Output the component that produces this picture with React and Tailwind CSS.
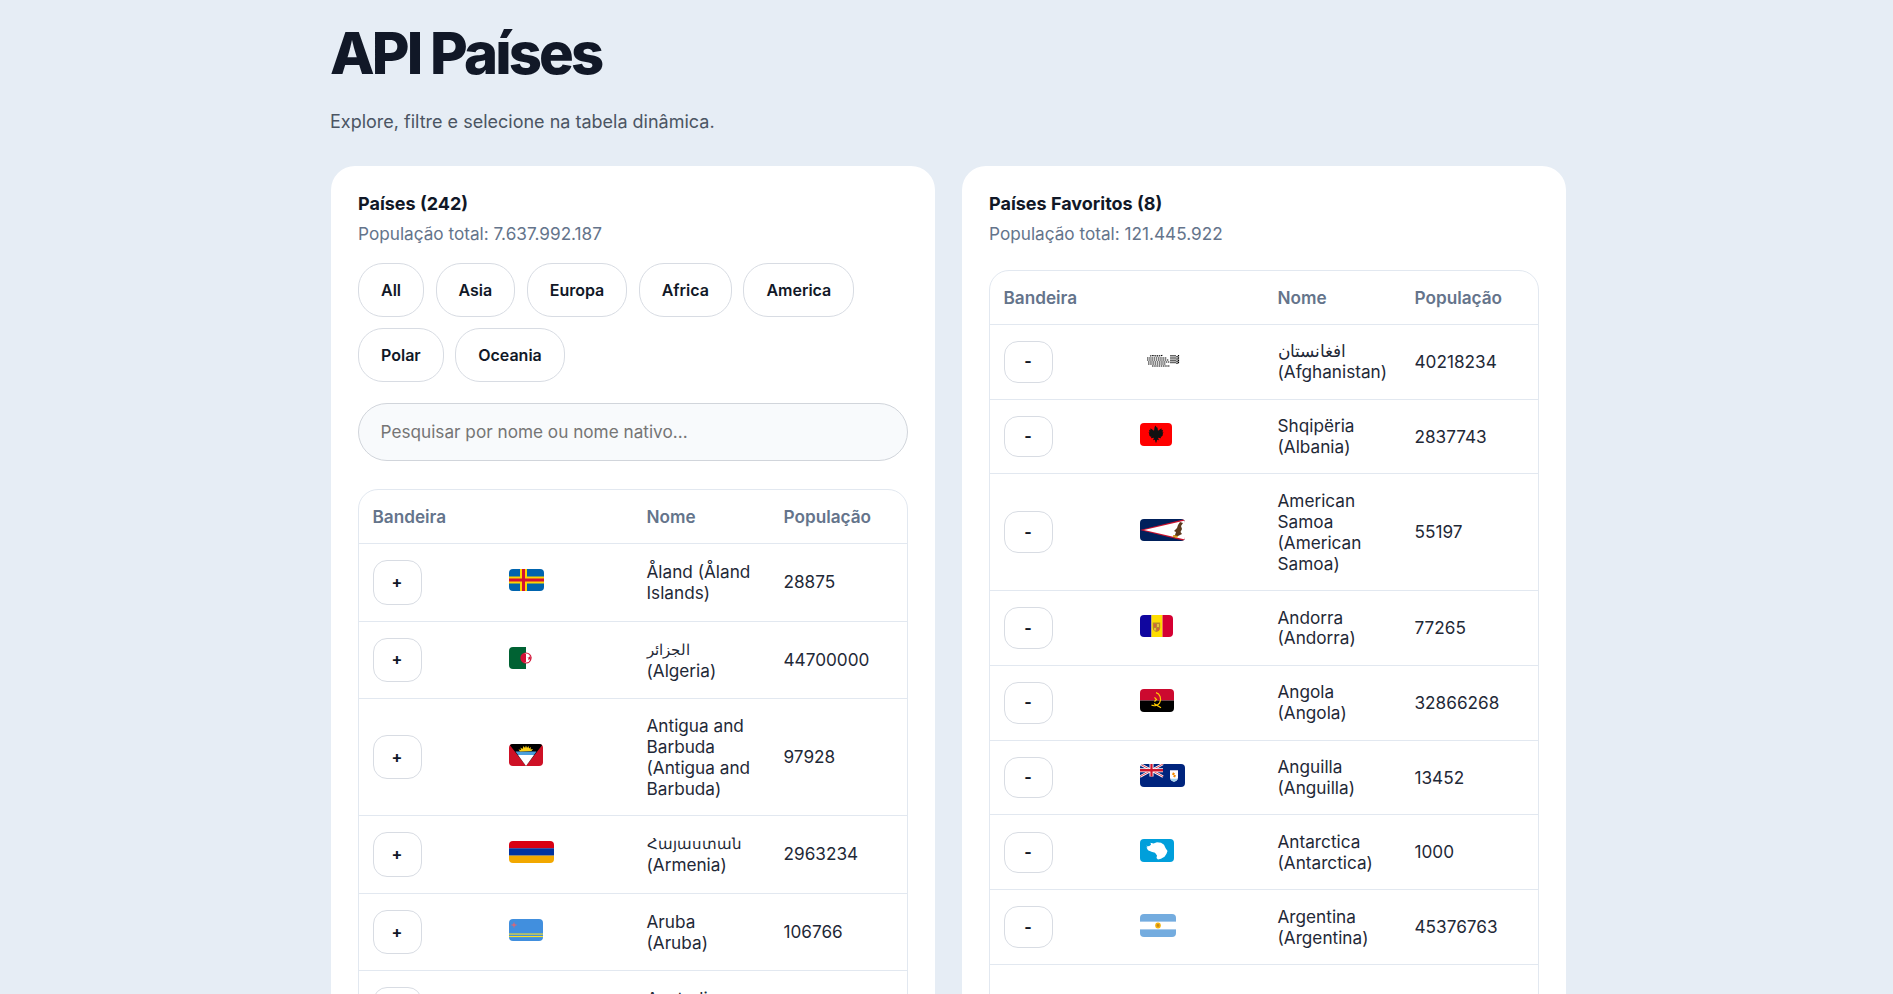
const font = { fontFamily: "Inter, sans-serif" };

function Flag({ w, h = 22, children }) {
  return (
    <svg
      width={w}
      height={h}
      viewBox={`0 0 ${w} 22`}
      preserveAspectRatio="none"
      className="block -ml-[1px] mb-[4px] rounded-[4px]"
    >
      {children}
    </svg>
  );
}

const flags = {
  aland: (
    <Flag w={35}>
      <rect width="35" height="22" fill="#0064ae" />
      <rect x="11" width="7" height="22" fill="#ffd300" />
      <rect y="7.5" width="35" height="7" fill="#ffd300" />
      <rect x="13" width="3" height="22" fill="#d21034" />
      <rect y="9.5" width="35" height="3" fill="#d21034" />
    </Flag>
  ),
  algeria: (
    <Flag w={34}>
      <rect width="17" height="22" fill="#006233" />
      <rect x="17" width="17" height="22" fill="#fff" />
      <circle cx="17" cy="11" r="5.6" fill="#d21034" />
      <path d="M17 6.500a4.500 4.500 0 0 1 0 9 3.800 4.500 0 0 1 0-9z" fill="#fff" />
      <path d="M14.800 6.800a4.500 4.500 0 0 0 0 8.400l2.200-.2v-8z" fill="#d21034" />
      <path d="M20.500 9l.6 1.600 1.700 0-1.300 1 .5 1.600-1.500-1-1.400 1 .5-1.600-1.300-1 1.700 0z" fill="#d21034" />
    </Flag>
  ),
  antigua: (
    <Flag w={34}>
      <rect width="34" height="22" fill="#ce1126" />
      <path d="M0 0h34L17 22z" fill="#000" />
      <path d="M9 11h16l-8 11z" fill="#fff" />
      <path d="M6.500 7.500h21L25 11H9z" fill="#4a9fdc" />
      <path d="M11 7.500l-1.500-2 2.500.5-.5-2.500 2 1.500L14.500 2l1.500 2 1-2.500 1 2.500 1.500-2 .500 2.500 2-1.500-.5 2.500 2.500-.5-1.500 2z" fill="#fcd116" />
    </Flag>
  ),
  armenia: (
    <Flag w={45}>
      <rect width="45" height="7.400" fill="#d90012" />
      <rect y="7.300" width="45" height="7.400" fill="#0033a0" />
      <rect y="14.600" width="45" height="7.400" fill="#f2a800" />
    </Flag>
  ),
  aruba: (
    <Flag w={34}>
      <rect width="34" height="22" fill="#418fde" />
      <rect y="14.500" width="34" height="1.100" fill="#fbe122" />
      <rect y="17" width="34" height="1.100" fill="#fbe122" />
      <path d="M5 2.500l.7 2.800 2.800.7-2.800.7L5 9.500l-.7-2.800L1.500 6l2.800-.7z" fill="#e5636f" />
    </Flag>
  ),
  australia: (
    <Flag w={44}>
      <rect width="44" height="22" fill="#00008b" />
    </Flag>
  ),
  afghanistan: (
    <Flag w={46}>
      <rect width="46" height="22" fill="#fff" />
      <g stroke="#000" strokeWidth="1.200" fill="none" strokeDasharray="1.500 .7">
        <path d="M7 9h20M7 11h22M8 13h22M8 15h18M12 17h18" />
        <path d="M31 6v9M33 6v9M35 6v9M37 7v8M38.500 6v9" />
        <path d="M10 7c4-1 8 1 13-1" />
      </g>
    </Flag>
  ),
  albania: (
    <Flag w={32} h={23}>
      <rect width="32" height="22" fill="#ff0000" />
      <path
        d="M14.500 4l1-1.500 1 1.500 1 .5.500 3 3.500-2.500.2 2 1.300-.5-.5 2.500 1-.2-1 2.200.7.200-1.700 2-.8-.2.300 1.500-3-.5 1 2.500-2-.5-.5 2.500L16 19l-.5-.5-.5-2.500-2 .5 1-2.500-3 .5.300-1.500-.8.200-1.700-2 .7-.200-1-2.200 1 .2-.5-2.500 1.300.5.200-2 3.500 2.500.5-3z"
        fill="#111"
      />
    </Flag>
  ),
  samoa: (
    <Flag w={45}>
      <rect width="45" height="22" fill="#00205b" />
      <path d="M45 0v22L0 11z" fill="#c8102e" />
      <path d="M45 1.500v19L4 11z" fill="#fff" />
      <path d="M40 3l3 1-2 3 1 3-1.500 3 1.500 2-4 2-4 2-1-2 2-1 1-3-2-1 3-3 1-3z" fill="#5b3a1e" />
      <path d="M33 16l5 1-1 2-4-1z" fill="#e0a526" />
    </Flag>
  ),
  andorra: (
    <Flag w={33}>
      <rect width="11.500" height="22" fill="#10069f" />
      <rect x="11.500" width="11" height="22" fill="#fedd00" />
      <rect x="22.500" width="10.500" height="22" fill="#d50032" />
      <path d="M12.800 7.500h7.400v5.500c0 2.500-1.900 3.600-3.700 4-1.800-.4-3.700-1.500-3.700-4z" fill="#b9892c" />
      <rect x="14" y="9" width="2" height="3" fill="#d5613a" />
      <rect x="17" y="9" width="2" height="3" fill="#e8c13a" />
      <rect x="14" y="13" width="2" height="2.500" fill="#e8c13a" />
      <rect x="17" y="13" width="2" height="2.500" fill="#d5613a" />
    </Flag>
  ),
  angola: (
    <Flag w={34} h={23}>
      <rect width="34" height="11" fill="#cc092f" />
      <rect y="11" width="34" height="11" fill="#000" />
      <g stroke="#ffcb00" fill="none" strokeWidth="1.200">
        <path d="M16 3.500c4 1 6 6 3.500 10-1.500 2-5 3-8 2" />
        <path d="M14 14l7 4M14.500 8l2 2-2 2" />
      </g>
    </Flag>
  ),
  anguilla: (
    <Flag w={45} h={23}>
      <rect width="45" height="22" fill="#00247d" />
      <path d="M0 0l23 12M23 0L0 12" stroke="#fff" strokeWidth="2.400" />
      <path d="M0 0l23 12M23 0L0 12" stroke="#cf142b" strokeWidth=".8" />
      <path d="M11.500 0v12M0 6h23" stroke="#fff" strokeWidth="4" />
      <path d="M11.500 0v12M0 6h23" stroke="#cf142b" strokeWidth="2.200" />
      <path d="M30 6h8v7c0 2.500-2 3.500-4 4-2-.5-4-1.500-4-4z" fill="#fff" />
      <path d="M30.500 14h7c-.5 1.500-2 2.300-3.500 2.700-1.500-.4-3-1.200-3.500-2.700z" fill="#9fd4ef" />
      <path d="M33 8l2 1-1 1 2 1-1 2-2-1 1-1-2-1z" fill="#f18a00" />
    </Flag>
  ),
  antarctica: (
    <Flag w={34} h={23}>
      <rect width="34" height="22" fill="#009fdb" />
      <path
        d="M6 6.500l3 .5 2-1.500-.5-2 3 .8 3.500-1.300 4 .5 3 2 1.500 3 2 3-1 2.500-2 3-3.500 2-3 .7-1.500-1.500.5-2.500-2-2.500-3.500-1-3.500-1.500-1.500-2.500 1.500-.5z"
        fill="#fff"
      />
    </Flag>
  ),
  argentina: (
    <Flag w={36} h={23}>
      <rect width="36" height="22" fill="#74acdf" />
      <rect y="7.300" width="36" height="7.400" fill="#fff" />
      <circle cx="18" cy="11" r="2.800" fill="#f6b40e" />
      <circle cx="18" cy="11" r="1.400" fill="#c98a1b" />
    </Flag>
  ),
};

const regions = ["All", "Asia", "Europa", "Africa", "America", "Polar", "Oceania"];

const paises = [
  { flag: "aland", nome: "Åland", en: "Åland Islands", pop: 28875 },
  { flag: "algeria", nome: "الجزائر", en: "Algeria", pop: 44700000, nomeClass: "text-[15px]" },
  { flag: "antigua", nome: "Antigua and Barbuda", en: "Antigua and Barbuda", pop: 97928 },
  { flag: "armenia", nome: "Հայաստան", en: "Armenia", pop: 2963234, nomeClass: "text-[15px]" },
  { flag: "aruba", nome: "Aruba", en: "Aruba", pop: 106766, quebra: true },
  { flag: "australia", nome: "Australia", en: "Australia", pop: 25687041 },
];

const favoritos = [
  { flag: "afghanistan", nome: "افغانستان", en: "Afghanistan", pop: 40218234 },
  { flag: "albania", nome: "Shqipëria", en: "Albania", pop: 2837743 },
  { flag: "samoa", nome: "American Samoa", en: "American Samoa", pop: 55197 },
  { flag: "andorra", nome: "Andorra", en: "Andorra", pop: 77265 },
  { flag: "angola", nome: "Angola", en: "Angola", pop: 32866268 },
  { flag: "anguilla", nome: "Anguilla", en: "Anguilla", pop: 13452 },
  { flag: "antarctica", nome: "Antarctica", en: "Antarctica", pop: 1000 },
  { flag: "argentina", nome: "Argentina", en: "Argentina", pop: 45376763 },
];

function Tabela({ rows, acao, btnClass }) {
  return (
    <div className="flex-1 rounded-[20px] border border-[#e2e8f0] overflow-hidden">
      <table className="w-full table-fixed border-collapse text-left text-[17.2px] leading-[20.9px] text-[#1f2937]">
        <thead>
          <tr className="border-b border-[#e2e8f0]">
            <th className="p-[16.5px_13.5px_15.4px] font-semibold text-[#64748b]">Bandeira</th>
            <th className="p-[16.5px_13.5px_15.4px]"></th>
            <th className="p-[16.5px_13.5px_15.4px] font-semibold text-[#64748b]">Nome</th>
            <th className="p-[16.5px_13.5px_15.4px] font-semibold text-[#64748b]">População</th>
          </tr>
        </thead>
        <tbody>
          {rows.map((p) => (
            <tr key={p.flag} className="border-b border-[#e2e8f0]">
              <td className="p-[16px_13.5px] align-middle">
                <button className={`w-[49px] rounded-[14px] border border-[#d8dce3] bg-white text-[16px] font-bold text-[#111827] ${btnClass}`}>
                  {acao}
                </button>
              </td>
              <td className="p-[16px_13.5px] align-middle">{flags[p.flag]}</td>
              <td className="p-[16.5px_13.5px_15.5px] align-middle">
                <span className={p.nomeClass}>{p.nome}</span> {p.quebra && <br />}({p.en})
              </td>
              <td className="p-[16.5px_13.5px_15.5px] align-middle">{p.pop}</td>
            </tr>
          ))}
        </tbody>
      </table>
    </div>
  );
}

function Resumo({ titulo, total }) {
  return (
    <>
      <h2 className="text-[18px] leading-[21px] font-bold text-[#111827]">{titulo}</h2>
      <p className="mt-[8.5px] text-[17.2px] leading-[22px] text-[#64748b]">População total: {total}</p>
    </>
  );
}

export default function App() {
  return (
    <div className="h-screen overflow-hidden bg-[#e6edf5]" style={font}>
      <div className="ml-[331px] w-[1235px]">
        <h1 className="-ml-[1px] pt-[19px] text-[58px] leading-[68px] font-extrabold tracking-[-0.05em] text-[#111827]">
          API Países
        </h1>
        <p className="-ml-[1px] mt-[22px] text-[18px] leading-[26px] text-[#4b5563]">
          Explore, filtre e selecione na tabela dinâmica.
        </p>
        <div className="mt-[31px] grid grid-cols-2 gap-[27px]">
          <section className="flex flex-col rounded-[24px] bg-white p-[27px]">
            <Resumo titulo="Países (242)" total="7.637.992.187" />
            <div className="mt-[18.5px] flex flex-wrap gap-x-[11.5px] gap-y-[11px]">
              {regions.map((r) => (
                <button
                  key={r}
                  className="h-[54px] rounded-[25px] border border-[#d8dce3] bg-white px-[22px] pb-[1px] text-[16px] font-semibold text-[#111827]"
                >
                  {r}
                </button>
              ))}
            </div>
            <input
              className="mt-[21px] h-[58px] w-full rounded-[29px] border border-[#d1d5db] bg-[#f8fafc] px-[21.5px] pb-[1px] text-[17.2px] placeholder:text-[#757575]"
              placeholder="Pesquisar por nome ou nome nativo..."
            />
            <div className="mt-[28px] flex flex-1 flex-col">
              <Tabela rows={paises} acao="+" btnClass="h-[44.75px]" />
            </div>
          </section>
          <section className="flex flex-col rounded-[24px] bg-white p-[27px]">
            <Resumo titulo="Países Favoritos (8)" total="121.445.922" />
            <div className="mt-[25.5px] flex flex-1 flex-col">
              <Tabela rows={favoritos} acao="-" btnClass="h-[41.6px]" />
            </div>
          </section>
        </div>
      </div>
    </div>
  );
}
